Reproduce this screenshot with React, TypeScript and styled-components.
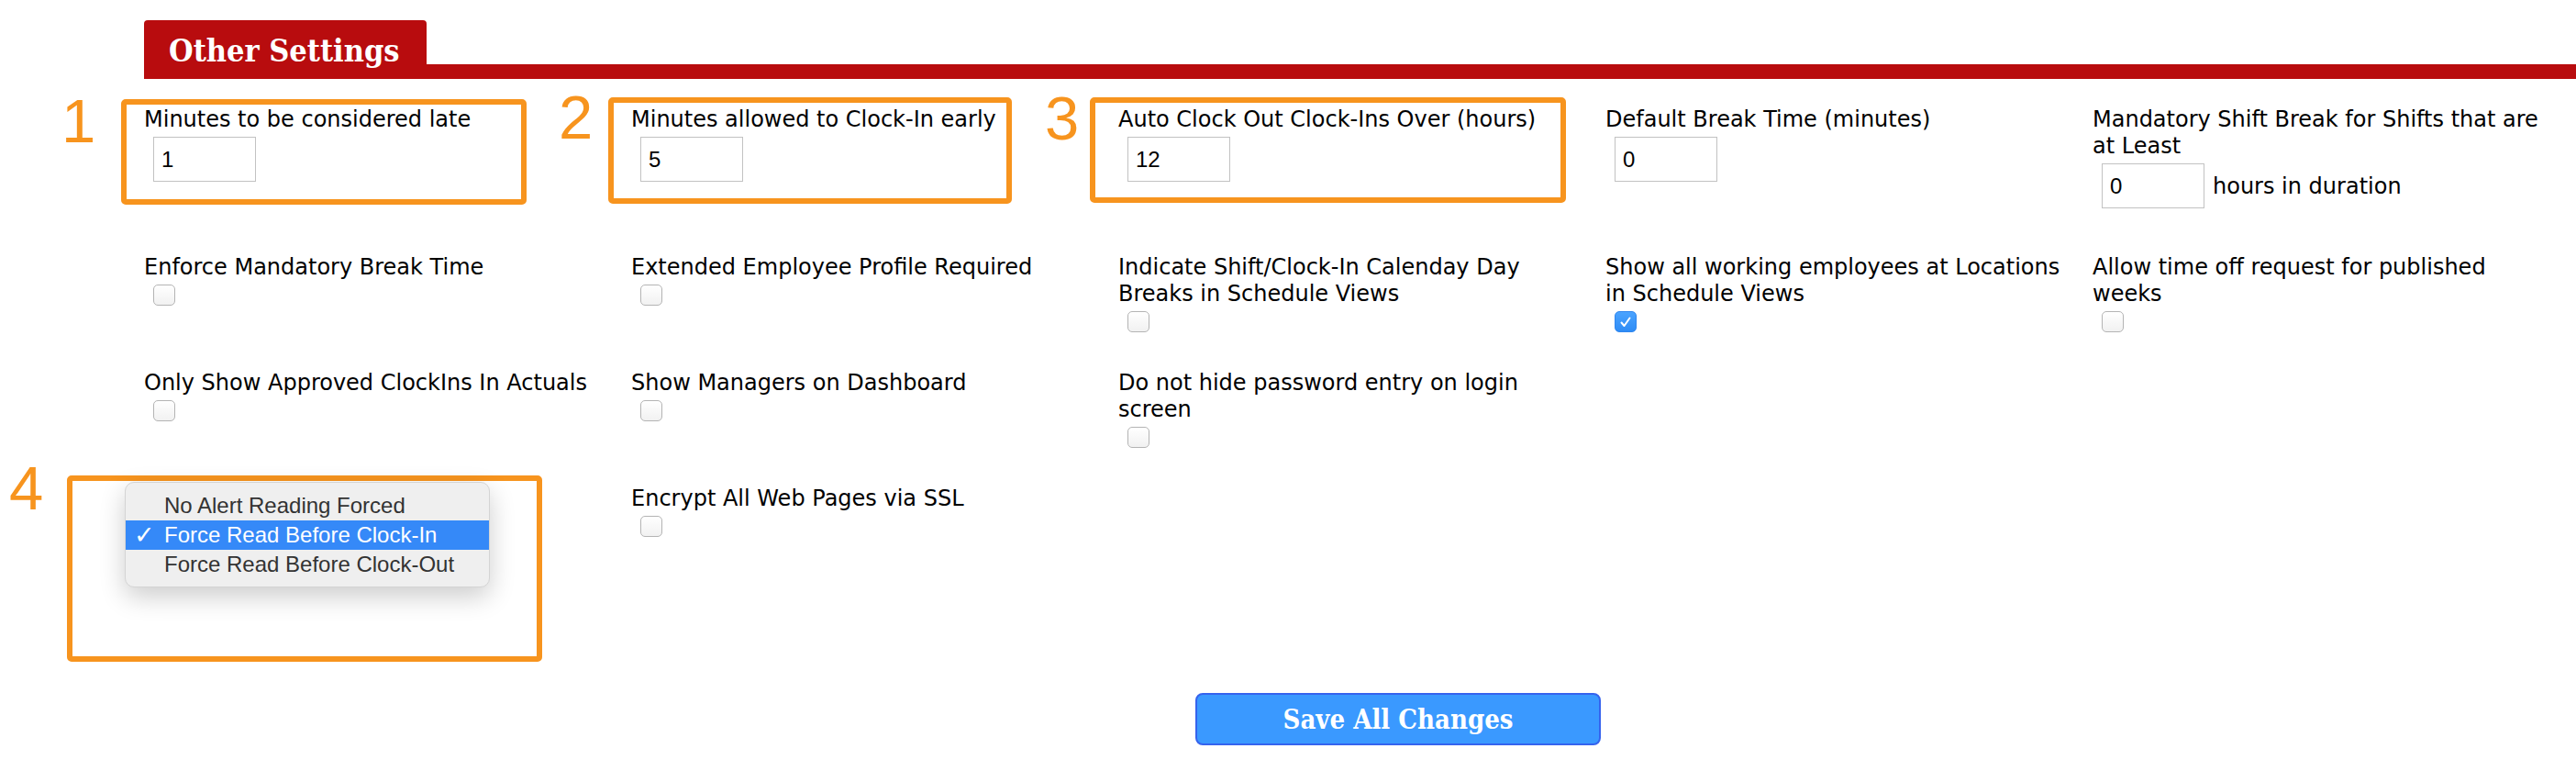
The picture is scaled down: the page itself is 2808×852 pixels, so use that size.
import React from "react";
import styled, { createGlobalStyle } from "styled-components";

const GlobalStyle = createGlobalStyle`
  html,
  body {
    margin: 0;
    padding: 0;
    background: #fff;
  }
  body {
    font-family: "DejaVu Sans", Verdana, sans-serif;
    color: #000;
  }
`;

const Page = styled.div`
  position: relative;
  width: 2808px;
  height: 852px;
  padding-top: 22px;
  box-sizing: border-box;
  overflow: hidden;
`;

const Header = styled.div`
  display: flex;
  align-items: flex-end;
  margin-left: 157px;
`;

const Tab = styled.div`
  width: 308px;
  height: 64px;
  box-sizing: border-box;
  padding-left: 27px;
  background: #b80c0e;
  border-radius: 4px 4px 0 0;
  color: #fff;
  font-family: "DejaVu Serif", "Liberation Serif", serif;
  font-stretch: condensed;
  font-weight: bold;
  font-size: 34px;
  line-height: 66px;
  white-space: nowrap;
`;

const Bar = styled.div`
  flex: 1;
  height: 16px;
  background: #b80c0e;
`;

const Grid = styled.div`
  display: grid;
  grid-template-columns: repeat(5, 531px);
  row-gap: 38px;
  align-items: start;
  margin: 27px 0 0 157px;
`;

const Cell = styled.div`
  position: relative;
  padding-right: 26px;
`;

const Label = styled.div`
  padding-top: 3px;
  font-size: 24px;
  line-height: 29px;
`;

const Control = styled.div`
  display: flex;
  align-items: center;
  gap: 9px;
  margin: 4px 0 0 10px;
  font-size: 24px;
`;

const NumberInput = styled.input`
  width: 112px;
  height: 49px;
  box-sizing: border-box;
  margin: 0 0 9px;
  padding: 0 8px;
  border: 1px solid #c2c2c2;
  border-radius: 0;
  outline: none;
  font-family: "Liberation Sans", Arial, sans-serif;
  font-size: 24px;
  color: #000;
`;

const Suffix = styled.span`
  margin-bottom: 9px;
`;

const Box = styled.span<{ $on?: boolean }>`
  display: flex;
  align-items: center;
  justify-content: center;
  width: 24px;
  height: 23px;
  box-sizing: border-box;
  border-radius: 5px;
  border: 1.5px solid ${(p) => (p.$on ? "#2f86ef" : "#b4b4b4")};
  background: ${(p) =>
    p.$on ? "linear-gradient(#4aa3ff, #2e8cf5)" : "linear-gradient(#ffffff, #f1f1f1)"};
`;

const Menu = styled.div`
  position: absolute;
  left: -21px;
  top: -1px;
  z-index: 2;
  width: 398px;
  box-sizing: border-box;
  padding: 9px 0 8px;
  background: #efefef;
  border: 1px solid #d4d4d4;
  border-radius: 10px;
  box-shadow: 0 10px 28px rgba(0, 0, 0, 0.2);
  font-family: "Liberation Sans", Arial, sans-serif;
  font-size: 24px;
`;

const MenuItem = styled.div<{ $selected?: boolean }>`
  position: relative;
  height: 32px;
  line-height: 32px;
  padding-left: 42px;
  color: ${(p) => (p.$selected ? "#fff" : "#333")};
  background: ${(p) => (p.$selected ? "#3589f8" : "transparent")};
  white-space: nowrap;
`;

const Tick = styled.span`
  position: absolute;
  left: 9px;
  top: 0;
  font-family: "DejaVu Sans", sans-serif;
  font-weight: bold;
  font-size: 27px;
`;

const Footer = styled.div`
  margin: 170px 0 0 1303px;
`;

const SaveButton = styled.button`
  width: 442px;
  height: 57px;
  box-sizing: border-box;
  border: 2px solid #3563ee;
  border-radius: 8px;
  background: #3a99ff;
  color: #fff;
  font-family: "DejaVu Serif", "Liberation Serif", serif;
  font-stretch: condensed;
  font-weight: bold;
  font-size: 29px;
  cursor: pointer;
`;

const Annot = styled.div<{ $x: number; $y: number; $w: number; $h: number }>`
  position: absolute;
  left: ${(p) => p.$x}px;
  top: ${(p) => p.$y}px;
  width: ${(p) => p.$w}px;
  height: ${(p) => p.$h}px;
  box-sizing: border-box;
  border: 6px solid #f7941e;
  border-radius: 5px;
  pointer-events: none;
`;

const Num = styled.span<{ $x: number; $y: number }>`
  position: absolute;
  left: ${(p) => p.$x}px;
  top: ${(p) => p.$y}px;
  color: #f7941e;
  font-family: "Liberation Sans", Arial, sans-serif;
  font-size: 67px;
  line-height: 1;
`;

function Check({ on }: { on?: boolean }) {
  return (
    <Box $on={on}>
      {on && (
        <svg width="14" height="14" viewBox="0 0 14 14">
          <path
            d="M2.5 7.5 L5.5 11 L11.5 2.5"
            fill="none"
            stroke="#fff"
            strokeWidth="2"
            strokeLinecap="round"
            strokeLinejoin="round"
          />
        </svg>
      )}
    </Box>
  );
}

function NumField({ label, value, after }: { label: string; value: string; after?: string }) {
  return (
    <Cell>
      <Label>{label}</Label>
      <Control>
        <NumberInput defaultValue={value} />
        {after && <Suffix>{after}</Suffix>}
      </Control>
    </Cell>
  );
}

function CheckField({ label, on }: { label: string; on?: boolean }) {
  return (
    <Cell>
      <Label>{label}</Label>
      <Control>
        <Check on={on} />
      </Control>
    </Cell>
  );
}

export default function App() {
  return (
    <>
      <GlobalStyle />
      <Page>
        <Header>
          <Tab>Other Settings</Tab>
          <Bar />
        </Header>

        <Grid>
          <NumField label="Minutes to be considered late" value="1" />
          <NumField label="Minutes allowed to Clock-In early" value="5" />
          <NumField label="Auto Clock Out Clock-Ins Over (hours)" value="12" />
          <NumField label="Default Break Time (minutes)" value="0" />
          <NumField
            label="Mandatory Shift Break for Shifts that are at Least"
            value="0"
            after="hours in duration"
          />

          <CheckField label="Enforce Mandatory Break Time" />
          <CheckField label="Extended Employee Profile Required" />
          <CheckField label="Indicate Shift/Clock-In Calenday Day Breaks in Schedule Views" />
          <CheckField label="Show all working employees at Locations in Schedule Views" on />
          <CheckField label="Allow time off request for published weeks" />

          <CheckField label="Only Show Approved ClockIns In Actuals" />
          <CheckField label="Show Managers on Dashboard" />
          <CheckField label="Do not hide password entry on login screen" />
          <div />
          <div />

          <Cell>
            <Menu>
              <MenuItem>No Alert Reading Forced</MenuItem>
              <MenuItem $selected>
                <Tick>✓</Tick>
                Force Read Before Clock-In
              </MenuItem>
              <MenuItem>Force Read Before Clock-Out</MenuItem>
            </Menu>
          </Cell>
          <CheckField label="Encrypt All Web Pages via SSL" />
        </Grid>

        <Footer>
          <SaveButton>Save All Changes</SaveButton>
        </Footer>

        <Annot $x={132} $y={108} $w={442} $h={115} />
        <Annot $x={663} $y={106} $w={440} $h={116} />
        <Annot $x={1188} $y={106} $w={519} $h={115} />
        <Annot $x={73} $y={518} $w={518} $h={203} />
        <Num $x={67} $y={98}>1</Num>
        <Num $x={609} $y={94}>2</Num>
        <Num $x={1139} $y={95}>3</Num>
        <Num $x={10} $y={498}>4</Num>
      </Page>
    </>
  );
}
